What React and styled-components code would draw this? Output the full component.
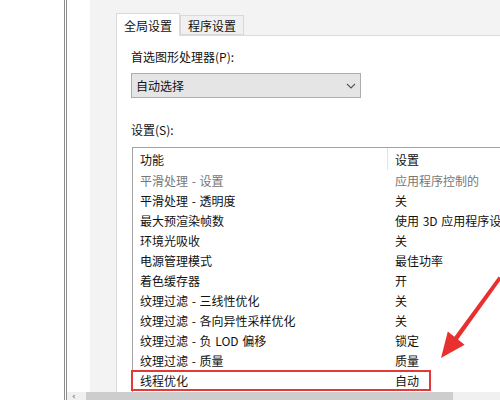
import React from "react";
import styled, { createGlobalStyle } from "styled-components";

const Global = createGlobalStyle`
  html, body { margin: 0; padding: 0; background: #ffffff; }
  body {
    font-family: "Noto Sans CJK SC", "Noto Sans", sans-serif;
    font-size: 12px;
    color: #111111;
  }
`;

const Page = styled.div`
  position: relative;
  width: 500px;
  height: 400px;
  overflow: hidden;
  display: flex;
  background: #ffffff;
`;

const LeftBlank = styled.div`
  width: 64px;
  flex: none;
  background: #ffffff;
`;

const Window = styled.div`
  flex: 1;
  min-width: 0;
  display: flex;
  flex-direction: column;
  border-left: 3px double #8c8c8c;
`;

const Main = styled.div`
  flex: 1;
  min-height: 0;
  display: flex;
`;

const Gutter = styled.div`
  width: 23px;
  flex: none;
  background: #ffffff;
`;

const GreyArea = styled.div`
  flex: 1;
  min-width: 0;
  background: #f3f3f3;
  padding: 13px 0 0 26px;
  display: flex;
  flex-direction: column;
`;

const TabStrip = styled.div`
  display: flex;
  align-items: flex-end;
  height: 22px;
  position: relative;
  z-index: 1;
`;

const Tab = styled.div`
  box-sizing: border-box;
  height: ${(p) => (p.$active ? "23px" : "20px")};
  margin-bottom: ${(p) => (p.$active ? "-1px" : "0")};
  padding: 0 7px;
  display: flex;
  align-items: center;
  background: ${(p) => (p.$active ? "#ffffff" : "#f0f0f0")};
  border: 1px solid #d9d9d9;
  border-bottom: ${(p) => (p.$active ? "none" : "1px solid #d9d9d9")};
  color: #111;
  white-space: nowrap;
`;

const TabPage = styled.div`
  flex: 1;
  min-height: 0;
  background: #ffffff;
  border-left: 1px solid #d9d9d9;
  border-top: 1px solid #dcdcdc;
  padding: 13px 0 0 14px;
  display: flex;
  flex-direction: column;
`;

const Label = styled.div`
  line-height: 16px;
  height: 16px;
  margin-top: ${(p) => p.$mt || 0}px;
  color: #111;
  white-space: nowrap;
`;

const Select = styled.div`
  box-sizing: border-box;
  margin-top: 8px;
  width: 230px;
  height: 25px;
  background: #e5e5e5;
  border: 1px solid #adadad;
  display: flex;
  align-items: center;
  justify-content: space-between;
  padding: 0 4px;
`;

const ListBox = styled.div`
  box-sizing: border-box;
  margin-top: 9px;
  margin-left: 1px;
  flex: 1;
  min-height: 0;
  width: 420px;
  border: 1px solid #a3a3a3;
  border-bottom: none;
  display: flex;
  flex-direction: column;
`;

const HeaderRow = styled.div`
  display: flex;
  height: 22px;
  align-items: stretch;
`;

const Row = styled.div`
  position: relative;
  display: flex;
  height: 20px;
  align-items: center;
  color: ${(p) => (p.$dim ? "#777777" : "#111111")};
`;

const NameCell = styled.div`
  width: 254px;
  flex: none;
  box-sizing: border-box;
  padding-left: 7px;
  display: flex;
  align-items: center;
  white-space: nowrap;
  word-spacing: 1px;
`;

const ValueCell = styled.div`
  flex: 1;
  box-sizing: border-box;
  padding-left: 7px;
  display: flex;
  align-items: center;
  white-space: nowrap;
  overflow: hidden;
  word-spacing: 1px;
  border-left: ${(p) => (p.$divider ? "1px solid #e3e3e3" : "1px solid transparent")};
`;

const Highlight = styled.div`
  position: absolute;
  left: -2px;
  top: 0;
  width: 300px;
  height: 21px;
  box-sizing: border-box;
  border: 2px solid #e23a3a;
  pointer-events: none;
`;

const HScroll = styled.div`
  height: 8px;
  flex: none;
  display: flex;
  background: #f0f0f0;
`;

const ScrollArrow = styled.div`
  width: 19px;
  flex: none;
  color: #606060;
  font-family: "DejaVu Sans", sans-serif;
  font-size: 9px;
  line-height: 8px;
  padding: 0 0 0 5px;
  box-sizing: border-box;
`;

const Thumb = styled.div`
  width: 367px;
  flex: none;
  background: #cdcdcd;
`;

const ArrowOverlay = styled.svg`
  position: absolute;
  left: 420px;
  top: 260px;
  width: 80px;
  height: 110px;
  pointer-events: none;
`;

const rows = [
  ["平滑处理 - 设置", "应用程序控制的", true],
  ["平滑处理 - 透明度", "关"],
  ["最大预渲染帧数", "使用 3D 应用程序设置"],
  ["环境光吸收", "关"],
  ["电源管理模式", "最佳功率"],
  ["着色缓存器", "开"],
  ["纹理过滤 - 三线性优化", "关"],
  ["纹理过滤 - 各向异性采样优化", "关"],
  ["纹理过滤 - 负 LOD 偏移", "锁定"],
  ["纹理过滤 - 质量", "质量"],
  ["线程优化", "自动", false, true],
];

function Chevron() {
  return (
    <svg width="10" height="6" viewBox="0 0 10 6">
      <path d="M1 1 L5 5 L9 1" fill="none" stroke="#555" strokeWidth="1.1" />
    </svg>
  );
}

export default function App() {
  return (
    <>
      <Global />
      <Page>
        <LeftBlank />
        <Window>
          <Main>
            <Gutter />
            <GreyArea>
              <TabStrip>
                <Tab $active>全局设置</Tab>
                <Tab>程序设置</Tab>
              </TabStrip>
              <TabPage>
                <Label>首选图形处理器(P):</Label>
                <Select>
                  <span>自动选择</span>
                  <Chevron />
                </Select>
                <Label $mt={24}>设置(S):</Label>
                <ListBox>
                  <HeaderRow>
                    <NameCell>功能</NameCell>
                    <ValueCell $divider>设置</ValueCell>
                  </HeaderRow>
                  {rows.map(([name, value, dim, hl]) => (
                    <Row key={name} $dim={dim}>
                      <NameCell>{name}</NameCell>
                      <ValueCell>{value}</ValueCell>
                      {hl && <Highlight />}
                    </Row>
                  ))}
                </ListBox>
              </TabPage>
            </GreyArea>
          </Main>
          <HScroll>
            <ScrollArrow>‹</ScrollArrow>
            <Thumb />
          </HScroll>
        </Window>
        <ArrowOverlay viewBox="420 260 80 110">
          <polygon
            points="441,358 447.8,331.5 454.4,336.8 498.6,276.5 501.6,278.7 458.0,339.6 464.6,344.8"
            fill="#e8302f"
          />
        </ArrowOverlay>
      </Page>
    </>
  );
}
